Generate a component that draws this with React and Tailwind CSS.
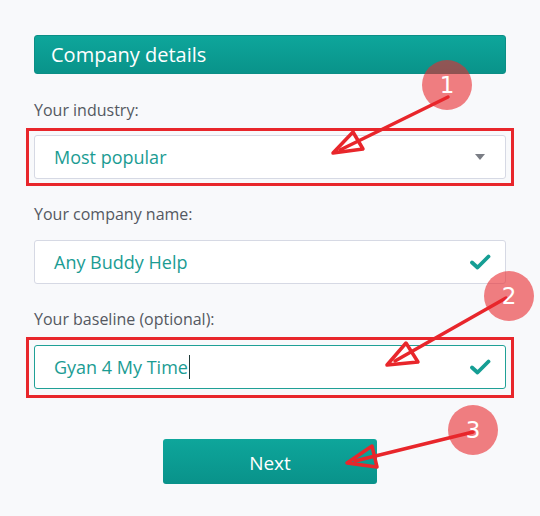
function Field({ value, active, caret, check, cursor }) {
  return (
    <div
      className={
        'flex items-center h-[44px] rounded-[3px] bg-white pl-[19px] pr-[14px] border ' +
        (active ? 'border-[#1fa096]' : 'border-[#d6d9e4]')
      }
    >
      <span className="flex-1 flex items-center text-[18px] text-[#1b9c93]">
        {value}
        {cursor && <span className="ml-px inline-block w-px h-[24px] bg-[#1f3b3a]" />}
      </span>
      {caret && (
        <svg width="10" height="6" viewBox="0 0 10 6" className="mr-[6px]">
          <path d="M0 0h10L5 6z" fill="#7a7d85" />
        </svg>
      )}
      {check && (
        <svg width="22" height="16" viewBox="0 0 22 16">
          <path
            d="M3 8.5l5.5 5L19.5 2.5"
            fill="none"
            stroke="#159e94"
            strokeWidth="3.8"
            strokeLinecap="round"
            strokeLinejoin="round"
          />
        </svg>
      )}
    </div>
  )
}

function Annotations() {
  const red = '#e8262b'
  const marks = [
    { n: '1', cx: 447, cy: 85, line: [448, 97, 340, 150], head: '333,153 353,132 363,149' },
    { n: '2', cx: 509, cy: 296, line: [506, 298, 395, 361], head: '387,365 406,343 418,362' },
    { n: '3', cx: 473, cy: 430, line: [473, 432, 355, 461], head: '347,463 372,446 377,467' },
  ]
  return (
    <svg className="absolute inset-0 pointer-events-none" width="540" height="516" viewBox="0 0 540 516">
      {marks.map((m) => (
        <g key={m.n}>
          <circle cx={m.cx} cy={m.cy} r="25" fill="rgb(234,42,46)" fillOpacity="0.6" />
          <line
            x1={m.line[0]}
            y1={m.line[1]}
            x2={m.line[2]}
            y2={m.line[3]}
            stroke={red}
            strokeWidth="3.5"
            strokeLinecap="round"
          />
          <polygon points={m.head} fill="none" stroke={red} strokeWidth="3.5" strokeLinejoin="round" />
          <text
            x={m.cx}
            y={m.cy + 8}
            textAnchor="middle"
            fill="#fff"
            fontSize="23"
            style={{ fontFamily: '"DejaVu Sans", sans-serif' }}
          >
            {m.n}
          </text>
        </g>
      ))}
    </svg>
  )
}

export default function App() {
  return (
    <div className="relative w-[540px] h-[516px] overflow-hidden bg-[#f8f9fb] font-['Open_Sans',sans-serif]">
      <div className="px-[34px] pt-[35px] flex flex-col">
        {/* Section header */}
        <div className="h-[39px] flex items-center pl-[16px] rounded-[3px] border border-[#0b8f86] bg-gradient-to-b from-[#0ea69b] to-[#09938a] text-white text-[20px]">
          Company details
        </div>

        <label className="mt-[25px] text-[16px] leading-[22px] text-[#545861]">Your industry:</label>
        <div className="mt-[7px] -mx-[8px] border-[3px] border-[#e8262b] px-[5px] py-[4px]">
          <Field value="Most popular" caret />
        </div>

        <label className="mt-[17px] text-[16px] leading-[22px] text-[#545861]">Your company name:</label>
        <div className="mt-[15px]">
          <Field value="Any Buddy Help" check />
        </div>

        <label className="mt-[24px] text-[16px] leading-[22px] text-[#545861]">Your baseline (optional):</label>
        <div className="mt-[7px] -mx-[8px] border-[3px] border-[#e8262b] px-[5px] pt-[5px] pb-[6px]">
          <Field value="Gyan 4 My Time" active check cursor />
        </div>

        <div className="mt-[41px] flex justify-center">
          <button className="w-[214px] h-[45px] pt-[3px] rounded-[3px] bg-gradient-to-b from-[#0ea69b] to-[#09928a] text-white text-[19px]">
            Next
          </button>
        </div>
      </div>
      <Annotations />
    </div>
  )
}
